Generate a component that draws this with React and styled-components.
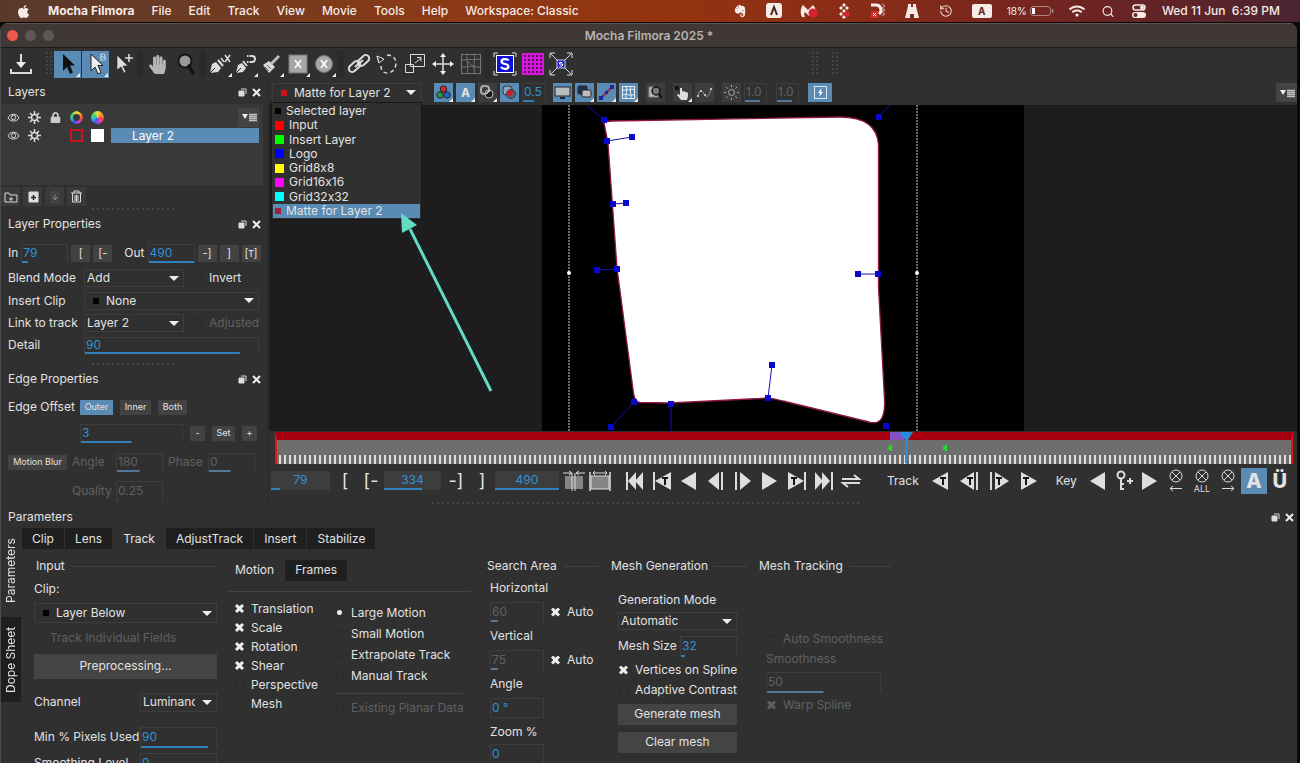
import React from 'react';
import styled, { createGlobalStyle, css } from 'styled-components';
import { FaApple, FaEvernote, FaHandPaper, FaLock, FaWifi } from 'react-icons/fa';
import { History, Search } from 'lucide-react';

const GlobalStyle = createGlobalStyle`
  * { box-sizing: border-box; }
  body {
    margin: 0;
    background: #0b0809;
    color: #e2e2e2;
    font: 12px/16px Inter, "Liberation Sans", sans-serif;
    font-feature-settings: "calt" 0;
    overflow: hidden;
  }
  button, input, select { font: inherit; color: inherit; margin: 0; padding: 0; border: 0; }
  svg { display: block; flex: none; }
`;

const Page = styled.div`
  display: flex;
  flex-direction: column;
  height: 100vh;
  overflow: hidden;
`;

/* mac menu bar */
const MenuBar = styled.header`
  flex: none;
  display: flex;
  align-items: center;
  justify-content: space-between;
  height: 22px;
  padding: 0 20px 0 16px;
  color: #f6ebe6;
  background: linear-gradient(90deg, #59392c 0, #6f3b22 17%, #8a3a16 32%, #93350f 50%, #8b2d17 65%, #712421 82%, #4b2430 100%);
`;
const Menus = styled.nav`
  display: flex;
  align-items: center;
  gap: 17px;
`;
const MenuName = styled.button`
  background: none;
  font-weight: ${p => (p.$bold ? 700 : 500)};
  white-space: nowrap;
`;
const Status = styled.div`
  display: flex;
  align-items: center;
  gap: 15px;
  svg { min-width: 16px; }
`;
const StatusApps = styled.div`
  display: flex;
  align-items: center;
  gap: 18px;
`;
const Battery = styled.div`
  display: flex;
  align-items: center;
  gap: 3px;
  font-size: 10px;
`;
const Clock = styled.time`
  font-weight: 500;
  white-space: pre;
`;
const LangBox = styled.span`
  width: 20px;
  height: 14px;
  border-radius: 2px;
  background: #f6ebe6;
  color: #5a2a22;
  font: 700 10px/14px Inter, sans-serif;
  text-align: center;
`;

/* window */
const Window = styled.main`
  flex: 1;
  min-height: 0;
  display: flex;
  flex-direction: column;
  margin: 1px 3px 0 0;
  border-left: 1px solid #4b4b4b;
  border-radius: 8px 8px 0 0;
  background: #303030;
  overflow: hidden;
`;
const TitleBar = styled.div`
  flex: none;
  display: grid;
  grid-template-columns: 1fr auto 1fr;
  align-items: center;
  height: 25px;
  padding: 0 6px;
  background: #3f3836;
  border-top: 1px solid #5b5453;
  border-bottom: 1px solid #1b1b1b;
  color: #b9b3b1;
  font-weight: 600;
`;
const Lights = styled.div`
  display: flex;
  gap: 7px;
`;
const Light = styled.button`
  width: 11px;
  height: 11px;
  border-radius: 50%;
  background: ${p => p.$color || '#5d5856'};
`;

const Toolbar = styled.div`
  flex: none;
  display: flex;
  align-items: center;
  height: 32px;
  padding-left: 6px;
`;
const ToolGroup = styled.div`
  display: flex;
  gap: ${p => (p.$tight ? 0 : 1)}px;
`;
const Divider = styled.span`
  width: ${p => (p.$thin ? 6 : 7)}px;
  height: 28px;
  margin-right: 1px;
  background: #2a2a2a;
`;
const Grip = styled.span`
  width: 8px;
  height: 24px;
  margin-left: ${p => p.$space || 0}px;
  background: radial-gradient(circle at 1px 1px, #444 1px, transparent 1px) 0 0 / 4px 4px;
`;
const Tool = styled.button`
  position: relative;
  display: grid;
  place-items: center;
  width: ${p => (p.$slim ? 26 : 27)}px;
  height: 27px;
  background: ${p => (p.$on ? '#5a8bb4' : 'transparent')};
  ${p => p.$corner && css`
    &::after {
      content: '';
      position: absolute;
      right: 1px;
      bottom: 1px;
      border: 2px solid #eee;
      border-top-color: transparent;
      border-left-color: transparent;
    }
  `}
`;

const Body = styled.div`
  flex: none;
  display: flex;
`;
const Sidebar = styled.aside`
  flex: none;
  width: 268px;
  height: 424px;
  border-right: 2px dotted #2a2a2a;
`;
const PanelHead = styled.div`
  display: flex;
  align-items: center;
  justify-content: space-between;
  height: 24px;
  padding: 0 ${p => p.$right || 6}px 0 7px;
`;
const PanelTitle = styled.h2`
  margin: 0;
  font-size: 12px;
  font-weight: 400;
`;
const HeadButtons = styled.div`
  display: flex;
  align-items: center;
  gap: 5px;
`;
const Plain = styled.button`
  display: grid;
  place-items: center;
  background: none;
`;
const Splitter = styled.div`
  height: 5px;
  margin: 0 auto;
  margin-left: ${p => (p.$left ? p.$left + 'px' : 'auto')};
  width: ${p => p.$width}px;
  background: radial-gradient(circle at 1px 2px, #474747 1px, transparent 1px) 0 0 / 5px 5px;
`;

const LayerList = styled.div`
  height: 81px;
  margin-right: 4px;
  padding-top: 3px;
  background: #393939;
`;
const LayerRow = styled.div`
  display: grid;
  grid-template-columns: repeat(5, 21px) 1fr;
  align-items: center;
  justify-items: center;
  height: ${p => (p.$head ? 20 : 16)}px;
  padding: 0 4px 0 2px;
`;
const MenuButton = styled.button`
  justify-self: end;
  display: grid;
  place-items: center;
  width: 21px;
  height: 19px;
  background: #444;
`;
const LayerName = styled.div`
  justify-self: stretch;
  margin-left: 3px;
  padding-left: 21px;
  line-height: 15px;
  background: #5a8bb4;
  color: #fff;
`;
const Square = styled.span`
  width: 13px;
  height: 13px;
  background: ${p => p.$fill || 'transparent'};
  border: 2px solid ${p => p.$line};
`;
const HueDot = styled.span`
  width: 13px;
  height: 13px;
  border-radius: 50%;
  background: conic-gradient(#f0e040, #ff9030, #f04a40, #d040d0, #4a50f0, #30c0e0, #50d050, #f0e040);
  ${p => p.$ring && css`
    mask: radial-gradient(circle, transparent 3px, #000 4px);
  `}
`;
const ListTools = styled.div`
  display: flex;
  gap: 3px;
  height: 22px;
  padding-top: 2px;
`;
const ListTool = styled.button`
  display: grid;
  place-items: center;
  width: 19px;
  height: 19px;
  background: #3a3a3a;
`;

/* form parts */
const FormRow = styled.div`
  display: flex;
  align-items: center;
  gap: ${p => (p.$gap === undefined ? 3 : p.$gap)}px;
  height: ${p => p.$h || 22}px;
  padding-left: ${p => p.$indent || 0}px;
`;
const Label = styled.label`
  flex: none;
  width: ${p => (p.$w ? p.$w + 'px' : 'auto')};
  margin-left: ${p => p.$space || 0}px;
  color: ${p => (p.$off ? '#606060' : 'inherit')};
  white-space: nowrap;
`;
const Field = styled.input`
  flex: none;
  width: ${p => p.$w}px;
  height: ${p => p.$h || 19}px;
  padding: 0 1px 2px;
  text-align: ${p => (p.$center ? 'center' : 'left')};
  color: #2f93d6;
  border: ${p => (p.$solid ? 0 : 1)}px solid #3d3d3d;
  background: linear-gradient(#337fb8, #337fb8) no-repeat left bottom / ${p => p.$fill || 0}% 2px ${p => (p.$solid ? '#3d3d3d' : 'transparent')};
  background-origin: border-box;
  background-clip: border-box;
  border-bottom-color: ${p => (p.$fill ? 'transparent' : '#3d3d3d')};
  &:disabled {
    color: #606060;
    background-image: linear-gradient(#55789a, #55789a);
  }
`;
const SelectBox = styled.span`
  flex: none;
  display: flex;
  align-items: center;
  gap: 7px;
  width: ${p => p.$w}px;
  height: ${p => p.$h || 18}px;
  padding: 0 4px;
  padding-left: ${p => (p.$dot ? 8 : 2)}px;
  border: 1px solid #3d3d3d;
  &::after {
    content: '';
    flex: none;
    border: 5px solid transparent;
    border-top-color: #eee;
    border-bottom: 0;
  }
`;
const Dot = styled.span`
  flex: none;
  width: ${p => p.$size || 6}px;
  height: ${p => p.$size || 6}px;
  background: ${p => p.$color};
`;
const Native = styled.select`
  flex: 1;
  min-width: 0;
  appearance: none;
  background: none;
  outline: 0;
`;
const Check = styled.input.attrs({ type: 'checkbox' })`
  flex: none;
  appearance: none;
  width: 9px;
  height: 9px;
  border: 1px solid #292929;
  &:checked {
    border: 0;
    background: #eee;
    clip-path: polygon(0 22%, 22% 0, 50% 26%, 78% 0, 100% 22%, 74% 50%, 100% 78%, 78% 100%, 50% 74%, 22% 100%, 0 78%, 26% 50%);
  }
  &:checked:disabled { background: #606060; }
`;
const Radio = styled.input.attrs({ type: 'radio' })`
  flex: none;
  appearance: none;
  width: 9px;
  height: 9px;
  border: 1px solid #292929;
  border-radius: 50%;
  &:checked {
    border: 2px solid #303030;
    background: #eee;
  }
`;
const SmallButton = styled.button`
  flex: none;
  min-width: ${p => p.$w || 19}px;
  height: ${p => (p.$bracket ? 17 : 15)}px;
  font-size: ${p => (p.$bracket ? 11 : 9)}px;
  line-height: 12px;
  background: ${p => (p.$on ? '#5a8bb4' : '#424242')};
`;
const WideButton = styled.button`
  width: ${p => p.$w}px;
  height: ${p => p.$h || 21}px;
  background: #444;
`;

/* viewer */
const Viewer = styled.section`
  position: relative;
  flex: 1;
  min-width: 0;
  display: flex;
  flex-direction: column;
`;
const ViewerBar = styled.div`
  display: flex;
  align-items: center;
  justify-content: space-between;
  height: 25px;
  padding-left: 3px;
`;
const ViewerTools = styled.div`
  display: flex;
  align-items: center;
  gap: 3px;
  margin-right: ${p => p.$space || 0}px;
`;
const ViewTool = styled.button`
  position: relative;
  display: grid;
  place-items: center;
  width: ${p => p.$w || 19}px;
  height: 19px;
  background: ${p => (p.$on ? '#5a8bb4' : '#3d3d3d')};
  ${p => p.$corner && css`
    &::after {
      content: '';
      position: absolute;
      right: 0;
      bottom: 0;
      border: 2px solid #eee;
      border-top-color: transparent;
      border-left-color: transparent;
    }
  `}
`;
const Popup = styled.ul`
  position: absolute;
  z-index: 2;
  top: 22px;
  left: 2px;
  width: 151px;
  height: 118px;
  margin: 0;
  padding: 1px;
  display: grid;
  grid-auto-rows: 1fr;
  list-style: none;
  background: #303030;
  border: 1px solid #181818;
`;
const PopupItem = styled.li`
  display: flex;
  align-items: center;
  gap: 5px;
  padding-left: 2px;
  line-height: 14px;
  background: ${p => (p.$on ? '#5a8bb4' : 'transparent')};
`;
const Pointer = styled.svg`
  position: absolute;
  z-index: 3;
  top: 133px;
  left: 131px;
`;
const Canvas = styled.div`
  flex: 1;
  min-height: 0;
  display: flex;
  justify-content: center;
  background: #1d1d1d;
`;
const Timeline = styled.div`
  position: relative;
  height: 32px;
  margin: 1px 4px 0 6px;
  border-top: 8px solid #a6000f;
  background:
    repeating-linear-gradient(90deg, transparent 0 2px, #dedede 2px 4px, transparent 4px 5px) no-repeat left bottom / 100% 9px,
    #6e6e6e;
  border-left: 2px solid #e01515;
  border-right: 2px solid #e01515;
`;
const PlayHead = styled.svg`
  position: absolute;
  top: -8px;
  left: 60%;
`;
const Transport = styled.div`
  display: flex;
  align-items: center;
  height: 33px;
  padding-left: 2px;
`;
const Keys = styled.div`
  display: flex;
  gap: ${p => p.$gap || 0}px;
  margin-left: ${p => p.$space || 0}px;
`;
const Key = styled.button`
  display: grid;
  place-items: center;
  width: ${p => p.$w || 26}px;
  height: 26px;
  background: ${p => (p.$on ? '#5a8bb4' : 'transparent')};
  font-size: ${p => (p.$big ? 20 : 18)}px;
  font-weight: ${p => (p.$big ? 800 : 400)};
  line-height: 20px;
`;

/* parameters */
const Params = styled.section`
  flex: 1;
  min-height: 0;
  display: flex;
  flex-direction: column;
`;
const ParamsBody = styled.div`
  display: flex;
  align-items: flex-start;
  margin-top: 3px;
`;
const SideTabs = styled.div`
  flex: none;
  width: 21px;
`;
const SideTab = styled.button`
  width: 20px;
  height: 85px;
  writing-mode: vertical-rl;
  rotate: 180deg;
  background: ${p => (p.$back ? '#1e1e1e' : 'transparent')};
`;
const ParamsMain = styled.div`
  flex: 1;
  min-width: 0;
`;
const Tabs = styled.div`
  display: flex;
  gap: ${p => p.$gap || 1}px;
`;
const Tab = styled.button`
  height: 21px;
  padding: 0 ${p => p.$pad || 10}px;
  background: ${p => (p.$front ? 'transparent' : '#1f1f1f')};
`;
const Columns = styled.div`
  display: grid;
  grid-template-columns: 183px 246px 112px 136px 132px;
  gap: 12px;
  padding: 7px 0 0 12px;
`;
const Group = styled.fieldset`
  margin: 0;
  padding: 0;
  border: 0;
  min-width: 0;
`;
const Heading = styled.div`
  display: flex;
  align-items: center;
  gap: 6px;
  height: 20px;
  margin-bottom: ${p => p.$below || 0}px;
  padding-left: ${p => p.$indent || 0}px;
  white-space: nowrap;
  &::after {
    content: '';
    flex: 1;
    height: 1px;
    background: #404040;
  }
`;
const Rule = styled.hr`
  height: 1px;
  margin: ${p => p.$m || '0'};
  border: 0;
  background: #444;
`;
const TwoCols = styled.div`
  display: grid;
  grid-template-columns: 100px 1fr;
  padding-left: 6px;
`;

/* drawings */
const Svg = ({ w = 24, h = w, box, children }) => (
  <svg width={w} height={h} viewBox={box || `0 0 ${w} ${h}`} fill="none" stroke="#dcdcdc" aria-hidden="true">{children}</svg>
);
const arrowPath = 'M7 2v17l4-4 3 7 3-1.500-3-7h5z';
const cells = [0, 1, 2, 3, 4];

const toolIcons = {
  save: <Svg><g strokeWidth="2"><path d="M12 2v13M2 17v4h20v-4" /></g><path d="M7 10h10l-5 6z" fill="#eee" stroke="none" /></Svg>,
  arrow: <Svg><path d={arrowPath} fill="#111" stroke="none" /></Svg>,
  arrowB: <Svg><path d={arrowPath} fill="#eee" stroke="#222" /><path d="M17 2v6h3a1.500 1.500 0 000-3h-3 2.500a1.500 1.500 0 000-3z" stroke="#c4d6e6" strokeWidth="1.200" /></Svg>,
  arrowPlus: <Svg><path d="M5 3v15l4-3 3 6 2-1-3-6h5z" fill="#ddd" stroke="#222" strokeWidth=".6" /><path d="M17 2v8M13 6h8" strokeWidth="1.600" /></Svg>,
  zoom: <Svg><circle cx="11" cy="9" r="6.500" fill="#999" stroke="#151515" strokeWidth="2" /><path d="M15 14l4 7" stroke="#111" strokeWidth="3.500" strokeLinecap="round" /></Svg>,
  penX: <Svg><path d="M2 21l2-9 4-2 5 6-3 4z" fill="#ddd" stroke="none" /><path d="M2 21l5-5" stroke="#222" /><path d="M10 8l5 6" strokeWidth="2" /><path d="M13 6l3 4M17 3l5 7M22 3l-5 7" strokeWidth="1.500" /></Svg>,
  penMagnet: <Svg><path d="M2 21l2-8 4-2 4 5-3 4z" fill="#ddd" stroke="none" /><path d="M2 21l5-5" stroke="#222" /><path d="M9 9l4 5" strokeWidth="2" /><path d="M13 4h5a2.500 2.500 0 010 6h-5" strokeWidth="2" /><path d="M15 3v2M15 9v2" stroke="#333" /></Svg>,
  brush: <Svg><path d="M3 13l6-4 6 6-6 6z" fill="#ddd" stroke="none" /><path d="M5 15l4 4M7 13l4 4" stroke="#555" /><path d="M11 12l8-8" strokeWidth="3" stroke="#bbb" /></Svg>,
  rectX: <Svg><rect x="3" y="3" width="18" height="18" fill="#a6a6a6" stroke="#777" /><path d="M9 8l6 8M15 8l-6 8" stroke="#fff" strokeWidth="1.600" /></Svg>,
  circX: <Svg><circle cx="12" cy="12" r="8.500" fill="#a6a6a6" stroke="#777" /><path d="M9 8l6 8M15 8l-6 8" stroke="#fff" strokeWidth="1.600" /></Svg>,
  link: <Svg><g strokeWidth="2"><rect x="1" y="11" width="13" height="7" rx="3.500" transform="rotate(-42 7.500 14.500)" /><rect x="10" y="5" width="13" height="7" rx="3.500" transform="rotate(-42 16.500 8.500)" /><path d="M8 15l8-7" /></g></Svg>,
  lasso: <Svg><path d="M2 4l7 3-5 4zM2 4l2 7" /><path d="M12 3c5 0 9 3 9 8s-3 10-9 10c-4 0-6-3-6-7" strokeDasharray="4 3" strokeWidth="1.500" /></Svg>,
  scale: <Svg><path d="M7.500 2.500h14v12h-14zM2.500 12.500h8v8h-8zM12 11l6-5M14 5.500h4v4" /></Svg>,
  move: <Svg><path d="M12 3v18M3 12h18" strokeWidth="1.500" /><path d="M9 5l3-4 3 4zM9 19l3 4 3-4zM5 9l-4 3 4 3zM19 9l4 3-4 3z" fill="#eee" stroke="none" /></Svg>,
  mesh: <Svg><path d="M2.500 2.500h19v19h-19zM2 9c4-2 8-1 20-2M2 15c5 1 10-3 20 1M8 2c-1 8 2 11 0 20M15 2c2 6-2 10 1 20M8 9l8 7" stroke="#777" /></Svg>,
  surface: <Svg><path d="M1 5V1h4M19 1h4v4M23 19v4h-4M5 23H1v-4" /><rect x="3.500" y="3.500" width="17" height="17" fill="#1010d8" stroke="#fff" /><path d="M15.500 8.500c-1-2-7-2-7 1 0 3.500 7 1.500 7 5 0 3-6 3-7.500 .5" stroke="#fff" strokeWidth="2.200" /></Svg>,
  grid: (
    <Svg>
      <path d="M1 1h22v22H1z" fill="#d916dc" stroke="none" />
      {cells.map(r => cells.map(c => <rect key={r + '-' + c} x={3 + c * 4} y={3 + r * 4} width="2" height="2" fill="#4d1450" stroke="none" />))}
    </Svg>
  ),
  align: <Svg><path d="M2 2l20 20M22 2L2 22M1 6V1h5M18 1h5v5M23 18v5h-5M6 23H1v-5" /><rect x="8" y="8" width="8" height="8" fill="#1515d8" stroke="#ccd" /><path d="M13.500 10.500h-3v1.500h3v2h-3" stroke="#fff" /></Svg>,
};

const viewIcons = {
  rgb: <Svg w={17}><circle cx="8.500" cy="5" r="3.200" fill="#d22" stroke="#222" /><circle cx="5" cy="11" r="3.200" fill="#2a9a3a" stroke="#222" /><circle cx="12" cy="11" r="3.200" fill="#26c" stroke="#222" /></Svg>,
  alpha: <b>A</b>,
  overlap: <Svg w={17}><rect x="2" y="2" width="8" height="8" rx="3" strokeWidth="2" stroke="#aaa" /><circle cx="10" cy="10" r="4" fill="#1c1c1c" stroke="#bbb" /><path d="M7 10l4-4" stroke="#ddd" strokeWidth="1.500" /></Svg>,
  matte: <Svg w={17}><rect x="2" y="2" width="9" height="9" rx="3" fill="#8aa6bf" stroke="#333" /><circle cx="10" cy="10" r="4.500" fill="#46688a" stroke="#333" /><circle cx="9" cy="9" r="3" fill="#c8202c" stroke="none" /></Svg>,
  screen: <Svg w={17}><rect x="1" y="3" width="15" height="9" fill="#bbb" stroke="#223" /><path d="M6 14h5" stroke="#223" strokeWidth="2" /></Svg>,
  layers: <Svg w={17}><rect x="2" y="2" width="9" height="8" rx="1" fill="#234" stroke="#223" /><rect x="6" y="6" width="9" height="7" rx="1" fill="#bbb" stroke="#223" /></Svg>,
  spline: <Svg w={17}><path d="M4 13L13 4" stroke="#1c1c4a" strokeWidth="2" /><path d="M5 12L12 5" stroke="#d35" strokeWidth="1.500" /><path d="M1 12h4v4H1zM12 1h4v4h-4zM7 7h3v3H7z" fill="#22229a" stroke="none" /></Svg>,
  mesh: <Svg w={17}><path d="M2.500 2.500h12v12h-12zM2 6c5 1 8-2 13 0M2 11c6-2 8 2 13-1M6 2c2 5-1 9 0 13M11 2c-2 5 1 9 0 13" stroke="#e5edf5" /></Svg>,
  zoom: <Svg w={17}><path d="M2 3h9v10H2z" fill="#bbb" stroke="#888" /><circle cx="9" cy="7" r="4" fill="#777" stroke="#111" strokeWidth="1.500" /><path d="M12 10l3 4" stroke="#111" strokeWidth="2" /></Svg>,
  hand: <Svg w={17}><path d="M1 2h4v4H1z" fill="#111" stroke="none" /><path d="M6 4v7l-2-1-1 1 4 5h6l1-4V9l-2-1-4-1V4z" fill="#ddd" stroke="none" /></Svg>,
  curve: <Svg w={17}><path d="M2 12c1-7 4-6 6-2s5 3 7-5" stroke="#999" /><path d="M1 11h2v2H1zM4 6h2v2H4zM8 10h2v2H8zM14 4h2v2h-2z" fill="#bbb" stroke="none" /></Svg>,
  sun: <Svg w={17}><circle cx="8.500" cy="8.500" r="3" stroke="#aaa" /><path d="M8.500 1v2M8.500 14v2M1 8.500h2M14 8.500h2M3 3l1.500 1.500M12.500 12.500L14 14M14 3l-1.500 1.500M4.500 12.500L3 14" stroke="#aaa" /></Svg>,
  bolt: <Svg w={17}><rect x="2.500" y="2.500" width="12" height="12" stroke="#dfe9f2" /><path d="M9.500 4L6 9h2l-1 4 4-5H9z" fill="#fff" stroke="none" /></Svg>,
};

const Eye = () => <Svg w={13}><path d="M1 7c2-5 9-5 11 0-2 4-9 4-11 0z" /><circle cx="6.500" cy="6.500" r="2.200" /></Svg>;
const Gear = () => <Svg w={13}><circle cx="6.500" cy="6.500" r="3" strokeWidth="1.500" /><path d="M6.500 0v3M6.500 10v3M0 6.500h3M10 6.500h3M2 2l2 2M9 9l2 2M11 2L9 4M4 9l-2 2" strokeWidth="1.500" /></Svg>;
const Lines = () => <Svg w={16} h={10}><path d="M1 2h6L4 7z" fill="#eee" stroke="none" /><path d="M8 2.500h8M8 4.500h8M8 6.500h8M8 8.500h8" stroke="#c4c4c4" strokeWidth="1.300" /></Svg>;

const PanelButtons = () => (
  <HeadButtons>
    <Plain aria-label="Float panel"><Svg w={9}><path d="M3 1h5v5" /><path d="M1 3h5v5H1z" fill="#ddd" stroke="#ddd" /></Svg></Plain>
    <Plain aria-label="Close panel"><Svg w={9}><path d="M1 1l7 7M8 1L1 8" strokeWidth="2" stroke="#eee" /></Svg></Plain>
  </HeadButtons>
);

const Select = ({ label, value, w, h, dot, id }) => (
  <SelectBox $w={w} $h={h} $dot={dot}>
    {dot && <Dot $color={dot} />}
    <Native id={id} aria-label={label} defaultValue={value}><option>{value}</option></Native>
  </SelectBox>
);

const Tick = ({ text, off, on, h, gap = 7, indent, id }) => (
  <FormRow $h={h} $gap={gap} $indent={indent}>
    <Check id={id} defaultChecked={on} disabled={off} />
    <Label htmlFor={id} $off={off}>{text}</Label>
  </FormRow>
);

const shapes = {
  bar: x => <path d={`M${x} 3v18`} strokeWidth="2" />,
  left: (x, w = 15) => <path d={`M${x} 12l${w}-9v18z`} fill="#dedede" stroke="none" />,
  right: (x, w = 15) => <path d={`M${x + w} 12l-${w}-9v18z`} fill="#dedede" stroke="none" />,
  t: x => <path d={`M${x - 3} 9h6M${x} 9v7`} stroke="#161616" strokeWidth="2" />,
};
const { bar, left, right, t } = shapes;
const playIcons = [
  ['First frame', <>{bar(4)}{left(5, 8)}{left(12, 8)}</>],
  ['Previous track start', <>{bar(4)}{left(5, 16)}{t(15)}</>],
  ['Play backward', left(4)],
  ['Step back', <>{left(4, 11)}{bar(18)}</>],
  ['Step forward', <>{bar(5)}{right(9, 11)}</>],
  ['Play forward', right(4)],
  ['Next track end', <>{right(3, 16)}{bar(20)}{t(9)}</>],
  ['Last frame', <>{right(3, 8)}{right(10, 8)}{bar(20)}</>],
  ['Loop', <path d="M3 10h17l-5-4M21 14H4l5 4" strokeWidth="2" />],
];
const trackIcons = [
  ['Track backwards', <>{left(3, 16)}{t(14)}</>],
  ['Track back one frame', <>{left(2, 14)}{bar(19)}{t(12)}</>],
  ['Track forward one frame', <>{bar(4)}{right(8, 14)}{t(12)}</>],
  ['Track forwards', <>{right(5, 16)}{t(10)}</>],
];
const keyIcons = [
  ['Previous key', left(4)],
  ['Add key', <><circle cx="9" cy="6" r="3.500" strokeWidth="2" /><path d="M9 9v12M9 15h3M9 20h3M15 12h6M18 9v6" strokeWidth="2" /></>],
  ['Next key', right(4)],
  ['Delete keys before', <><circle cx="12" cy="7" r="6" /><path d="M8 3l8 8M16 3l-8 8M6 19.500h12M9 17l-3 2.500 3 2.500" /></>],
  ['Delete all keys', <><circle cx="12" cy="7" r="6" /><path d="M8 3l8 8M16 3l-8 8" /><text x="12" y="23" fontSize="9" textAnchor="middle" fill="#dcdcdc" stroke="none">ALL</text></>],
  ['Delete keys after', <><circle cx="12" cy="7" r="6" /><path d="M8 3l8 8M16 3l-8 8M6 19.500h12M15 17l3 2.500-3 2.500" /></>],
];
const keyList = (list, w) => list.map(([name, art]) => (
  <Key key={name} aria-label={name} $w={w}><Svg>{art}</Svg></Key>
));

const points = [[62, 15], [337, 12], [65, 36], [90, 32], [71, 99], [84, 98], [55, 165], [75, 164], [316, 169], [336, 169], [230, 260], [226, 293], [92, 297], [129, 299], [69, 322], [344, 321]];

const Matte = () => (
  <svg width="482" height="100%" viewBox="0 0 482 326" preserveAspectRatio="xMidYMin slice" role="img" aria-label="Layer matte">
    <rect width="482" height="326" fill="#000" />
    <path d="M27 0v326M375 0v326" stroke="#d5d5d5" strokeDasharray="2 1" />
    <path
      d="M62 18Q63 16 70 16L298 12Q335 12 336.500 40V182L342.500 294Q344 322 327 317L241 296Q228 292 218 293.500L128 298 98 297.500Q93 297 91.500 288L75 163 66 38z"
      fill="#fff" stroke="#8c1840" strokeWidth="1.300"
    />
    <path d="M45 0l17 15M337 12l11-12M65 36l25-4M71 99l13-1M55 165l20-1M316 169h20M230 260l-4 33M92 297l-23 25M129 299v27" stroke="#1212b4" fill="none" />
    {points.map(([x, y]) => <rect key={x + '-' + y} x={x - 3} y={y - 3} width="6" height="6" fill="#0808cc" />)}
    <circle cx="27" cy="168" r="2" fill="#fff" />
    <circle cx="375" cy="168" r="2" fill="#fff" />
  </svg>
);

const clips = [
  ['Selected layer', '#000', 6],
  ['Input', '#f00', 9],
  ['Insert Layer', '#0f0', 9],
  ['Logo', '#00f', 9],
  ['Grid8x8', '#ff0', 9],
  ['Grid16x16', '#f0f', 9],
  ['Grid32x32', '#0ff', 9],
  ['Matte for Layer 2', '#a31d3f', 6],
];

const App = () => {
  return (
    <Page>
      <GlobalStyle />
      <MenuBar>
        <Menus>
          <FaApple size={15} />
          <MenuName $bold>Mocha Filmora</MenuName>
          {['File', 'Edit', 'Track', 'View', 'Movie', 'Tools', 'Help', 'Workspace: Classic'].map(name => (
            <MenuName key={name}>{name}</MenuName>
          ))}
        </Menus>
        <Status>
          <StatusApps>
            <FaEvernote size={14} />
            <Svg w={16}><rect width="16" height="15" rx="3" fill="#f6ebe6" stroke="none" /><path d="M5 12l3-8 3 8" stroke="#4a241c" strokeWidth="2" /></Svg>
            <Svg w={18} h={16}><path d="M2 14C-1 8 2 3 3 2l5 5 5-5c2 2 3 5 3 7L9 13 5 9c-1 2-1 3 0 5z" fill="#f6ebe6" stroke="none" /><circle cx="13" cy="10" r="4.500" fill="#d8232f" stroke="none" /></Svg>
            <Svg w={16}><path d="M8 0l2 2-2 2-2-2zM5 3l2 2-2 2-2-2zM11 3l2 2-2 2-2-2zM8 6l2 2-2 2-2-2zM5 9l2 2-2 2-2-2zM8 12l2 2-2 2-2-2z" fill="#f6ebe6" stroke="none" /><circle cx="11" cy="11" r="3" fill="#d8232f" stroke="none" /></Svg>
            <Svg w={16}><path d="M1 2h5a5 5 0 013 9" strokeWidth="3" stroke="#f6ebe6" /><path d="M12 1l3 2-3 2 3 2-3 2 3 2-3 2" stroke="#d9a79a" /><path d="M1 8h7v7H1z" fill="#e22a20" stroke="none" /><path d="M3 10l3 3M6 10l-3 3" stroke="#fff" /></Svg>
            <Svg w={16}><path d="M4 1h3v3h2V1h3v2l3 12H10v-4H6v4H1L4 3z" fill="#f6ebe6" stroke="none" /></Svg>
            <History size={14} strokeWidth={1.8} color="#eadbd6" />
            <LangBox>A</LangBox>
          </StatusApps>
          <Battery>
            18%
            <Svg w={24} h={12}><rect x=".5" y="1.500" width="20" height="9" rx="3" stroke="#a88988" /><path d="M2 3h3v6H2z" fill="#fff" stroke="none" /><path d="M22.500 4v4" stroke="#a88988" strokeWidth="1.500" /></Svg>
          </Battery>
          <FaWifi size={14} />
          <Search size={13} strokeWidth={2.2} />
          <Svg w={16} h={14}><rect x="2" y="1" width="12" height="5" rx="2.500" stroke="#f6ebe6" strokeWidth="1.500" /><circle cx="11" cy="3.500" r="2" fill="#f6ebe6" stroke="none" /><rect x="1" y="8" width="14" height="6" rx="3" fill="#f6ebe6" stroke="none" /><circle cx="4.500" cy="11" r="2" fill="#5e2430" stroke="none" /></Svg>
          <Clock>{'Wed 11 Jun  6:39 PM'}</Clock>
        </Status>
      </MenuBar>

      <Window>
        <TitleBar>
          <Lights>
            <Light $color="#f1574e" aria-label="Close" />
            <Light aria-label="Minimise" />
            <Light aria-label="Zoom window" />
          </Lights>
          <span>Mocha Filmora 2025 *</span>
        </TitleBar>

        <Toolbar>
          <ToolGroup><Tool aria-label="Save project">{toolIcons.save}</Tool></ToolGroup>
          <Grip $space={12} />
          <ToolGroup>
            <Tool $on $corner aria-label="Pick">{toolIcons.arrow}</Tool>
            <Tool $on $corner aria-label="Pick bezier">{toolIcons.arrowB}</Tool>
            <Tool aria-label="Add point">{toolIcons.arrowPlus}</Tool>
          </ToolGroup>
          <Divider $thin />
          <ToolGroup>
            <Tool aria-label="Pan"><FaHandPaper size={19} color="#b5b5b5" /></Tool>
            <Tool aria-label="Zoom">{toolIcons.zoom}</Tool>
          </ToolGroup>
          <Divider />
          <ToolGroup $tight>
            <Tool $slim $corner aria-label="X-spline">{toolIcons.penX}</Tool>
            <Tool $slim $corner aria-label="Magnetic spline">{toolIcons.penMagnet}</Tool>
            <Tool $slim $corner aria-label="Area brush">{toolIcons.brush}</Tool>
            <Tool $slim $corner aria-label="Rectangle">{toolIcons.rectX}</Tool>
            <Tool $slim $corner aria-label="Ellipse">{toolIcons.circX}</Tool>
          </ToolGroup>
          <Divider />
          <ToolGroup>
            <Tool aria-label="Attach layer">{toolIcons.link}</Tool>
            <Tool aria-label="Lasso">{toolIcons.lasso}</Tool>
            <Tool aria-label="Scale">{toolIcons.scale}</Tool>
            <Tool aria-label="Move">{toolIcons.move}</Tool>
            <Tool aria-label="Mesh">{toolIcons.mesh}</Tool>
          </ToolGroup>
          <Divider $thin />
          <ToolGroup>
            <Tool aria-label="Show surface">{toolIcons.surface}</Tool>
            <Tool aria-label="Show grid">{toolIcons.grid}</Tool>
            <Tool aria-label="Align surface">{toolIcons.align}</Tool>
          </ToolGroup>
          <Grip $space={238} />
          <Grip $space={12} />
        </Toolbar>

        <Body>
          <Sidebar>
            <PanelHead><PanelTitle>Layers</PanelTitle><PanelButtons /></PanelHead>
            <LayerList>
              <LayerRow $head>
                <Eye /><Gear /><FaLock size={11} color="#ccc" /><HueDot $ring /><HueDot />
                <MenuButton aria-label="Layer options"><Lines /></MenuButton>
              </LayerRow>
              <LayerRow>
                <Eye /><Gear /><span /><Square $line="#c8141e" /><Square $line="#fff" $fill="#fff" />
                <LayerName>Layer 2</LayerName>
              </LayerRow>
            </LayerList>
            <ListTools>
              <ListTool aria-label="New group"><Svg w={14}><path d="M1 12V3h4l1 2h7v7zM7 7v4M5 9h4" /></Svg></ListTool>
              <ListTool aria-label="Duplicate layer"><Svg w={12}><path d="M2 1h9v10H2z" fill="#ddd" /><path d="M6.500 4v5M4 6.500h5" stroke="#222" strokeWidth="1.500" /></Svg></ListTool>
              <ListTool aria-label="Merge layer"><Svg w={12}><path d="M3 1h6v10H3z" stroke="#555" /><path d="M6 3v5M4 6l2 3 2-3" stroke="#888" /></Svg></ListTool>
              <ListTool aria-label="Delete layer"><Svg w={13}><path d="M1 3h11M4 3V1h5v2M2.500 3v9h8V3M5 5v6M6.500 5v6M8 5v6" /></Svg></ListTool>
            </ListTools>
            <Splitter $width={85} />
            <PanelHead><PanelTitle>Layer Properties</PanelTitle><PanelButtons /></PanelHead>
            <FormRow $h={3} />
            <FormRow $h={28} $indent={7}>
              <Label htmlFor="in">In</Label><Field id="in" $w={47} $fill={15} defaultValue="79" />
              <SmallButton $bracket>[</SmallButton><SmallButton $bracket>[-</SmallButton>
              <Label htmlFor="out" $space={9}>Out</Label><Field id="out" $w={47} $fill={100} defaultValue="490" />
              <SmallButton $bracket>-]</SmallButton><SmallButton $bracket>]</SmallButton><SmallButton $bracket>[т]</SmallButton>
            </FormRow>
            <FormRow $gap={0} $indent={7}>
              <Label $w={76} htmlFor="blend">Blend Mode</Label><Select id="blend" w={100} value="Add" />
              <Tick id="invert" text="Invert" indent={9} />
            </FormRow>
            <FormRow $h={23} $gap={0} $indent={7}>
              <Label $w={76} htmlFor="insert">Insert Clip</Label><Select id="insert" w={175} value="None" dot="#000" />
            </FormRow>
            <FormRow $gap={0} $indent={7}>
              <Label $w={76} htmlFor="linkto">Link to track</Label><Select id="linkto" w={100} value="Layer 2" />
              <Tick id="adjusted" text="Adjusted" off indent={9} />
            </FormRow>
            <FormRow $gap={0} $indent={7}>
              <Label $w={76} htmlFor="detail">Detail</Label><Field id="detail" $w={175} $h={17} $fill={89} defaultValue="90" />
            </FormRow>
            <FormRow $h={6} />
            <Splitter $width={85} />
            <PanelHead><PanelTitle>Edge Properties</PanelTitle><PanelButtons /></PanelHead>
            <FormRow $h={32} $gap={7} $indent={7}>
              <Label $w={65}>Edge Offset</Label>
              <SmallButton $w={33} $on>Outer</SmallButton><SmallButton $w={31}>Inner</SmallButton><SmallButton $w={29}>Both</SmallButton>
            </FormRow>
            <FormRow $h={20} $gap={7} $indent={79}>
              <Field aria-label="Edge offset" $w={103} $fill={50} defaultValue="3" />
              <SmallButton $w={15}>-</SmallButton><SmallButton $w={23}>Set</SmallButton><SmallButton $w={15}>+</SmallButton>
            </FormRow>
            <FormRow $h={38} $gap={5} $indent={7}>
              <SmallButton $w={59}>Motion Blur</SmallButton>
              <Label $off $w={39} htmlFor="blurangle">Angle</Label><Field id="blurangle" disabled $w={47} $fill={50} defaultValue="180" />
              <Label $off $w={35} htmlFor="phase">Phase</Label><Field id="phase" disabled $w={47} $fill={48} defaultValue="0" />
            </FormRow>
            <FormRow $h={20} $gap={5} $indent={71}>
              <Label $off $w={39} htmlFor="quality">Quality</Label><Field id="quality" disabled $w={47} $h={20} $fill={3} defaultValue="0.25" />
            </FormRow>
          </Sidebar>

          <Viewer>
            <ViewerBar>
              <ViewerTools>
                <ViewerTools $space={10}><Select label="Viewed clip" w={149} h={20} value="Matte for Layer 2" dot="#c8141e" /></ViewerTools>
                <ViewerTools $space={4}>
                  <ViewTool $on $corner aria-label="Colour channels">{viewIcons.rgb}</ViewTool>
                  <ViewTool $on $corner aria-label="Alpha">{viewIcons.alpha}</ViewTool>
                  <ViewTool $corner aria-label="Mattes">{viewIcons.overlap}</ViewTool>
                  <ViewTool $on aria-label="Colorize">{viewIcons.matte}</ViewTool>
                  <Field aria-label="Matte opacity" $w={24} $fill={50} defaultValue="0.5" />
                </ViewerTools>
                <ViewerTools $space={5}>
                  <ViewTool $on aria-label="Overlays">{viewIcons.screen}</ViewTool>
                  <ViewTool $on $corner aria-label="Layer outlines">{viewIcons.layers}</ViewTool>
                  <ViewTool $on $corner aria-label="Splines">{viewIcons.spline}</ViewTool>
                  <ViewTool $on $corner aria-label="Show mesh">{viewIcons.mesh}</ViewTool>
                </ViewerTools>
                <ViewerTools $space={5}><ViewTool aria-label="Zoom window">{viewIcons.zoom}</ViewTool></ViewerTools>
                <ViewerTools $space={5}>
                  <ViewTool $corner aria-label="Stabilise view">{viewIcons.hand}</ViewTool>
                  <ViewTool aria-label="Trace">{viewIcons.curve}</ViewTool>
                </ViewerTools>
                <ViewerTools $space={6}>
                  <ViewTool aria-label="Brightness">{viewIcons.sun}</ViewTool>
                  <Field disabled aria-label="Gain" $w={23} $fill={70} defaultValue="1.0" />
                </ViewerTools>
                <ViewerTools $space={6}><Field disabled aria-label="Gamma" $w={23} $fill={70} defaultValue="1.0" /></ViewerTools>
                <ViewTool $w={24} $on aria-label="Preview">{viewIcons.bolt}</ViewTool>
              </ViewerTools>
              <MenuButton aria-label="Viewer options"><Lines /></MenuButton>
            </ViewerBar>
            <Popup>
              {clips.map(([name, color, size], i) => (
                <PopupItem key={name} $on={i === clips.length - 1}><Dot $color={color} $size={size} />{name}</PopupItem>
              ))}
            </Popup>
            <Pointer width="94" height="182">
              <path d="M10 16l81 162" stroke="#62dcc3" strokeWidth="3" />
              <path d="M1 0l16 12-15 8z" fill="#62dcc3" />
            </Pointer>

            <Canvas><Matte /></Canvas>
            <Timeline>
              <PlayHead width="66" height="31">
                <path d="M5 0h14v8H5z" fill="#8250c0" />
                <path d="M14 0h14l-5 8v23h-3V8z" fill="#268bd8" />
                <path d="M7 12v8l-5-4zM62 12v8l-5-4z" fill="#22dd22" />
              </PlayHead>
            </Timeline>
            <Transport>
              <Field aria-label="In point" $solid $center $w={59} $fill={15} defaultValue="79" />
              <Keys $space={2}><Key>[</Key><Key>[-</Key></Keys>
              <Field aria-label="Current frame" $solid $center $w={57} $fill={67} defaultValue="334" />
              <Keys $space={2}><Key>-]</Key><Key>]</Key></Keys>
              <Field aria-label="Out point" $solid $center $w={64} $fill={100} defaultValue="490" />
              <Keys $space={2}>
                <Key aria-label="Zoom timeline in"><Svg><path d="M3 7h18v13H3z" fill="#858585" stroke="none" /><path d="M10 4v18M13 4v18" /><path d="M1 4h8M7 2l3 2-3 2M23 4h-8M17 2l-3 2 3 2" /></Svg></Key>
                <Key aria-label="Zoom timeline out"><Svg><path d="M3 7h18v13H3z" fill="#858585" /><path d="M2 3v19M22 3v19" strokeWidth="1.500" /><path d="M5 4h14M7 2L5 4l2 2M17 2l2 2-2 2" /></Svg></Key>
              </Keys>
              <Keys $space={8}>{keyList(playIcons, 27)}</Keys>
              <Label $space={23}>Track</Label>
              <Keys $space={8} $gap={1}>{keyList(trackIcons, 28)}</Keys>
              <Label $space={14}>Key</Label>
              <Keys $space={8}>
                {keyList(keyIcons)}
                <Key $big $on>A</Key>
                <Key $big>Ü</Key>
              </Keys>
            </Transport>
            <FormRow $h={4} />
            <Splitter $width={430} $left={163} />
            <FormRow $h={3} />
          </Viewer>
        </Body>

        <Params>
          <PanelHead $right={3}><PanelTitle>Parameters</PanelTitle><PanelButtons /></PanelHead>
          <ParamsBody>
            <SideTabs>
              <SideTab>Parameters</SideTab>
              <SideTab $back>Dope Sheet</SideTab>
            </SideTabs>
            <ParamsMain>
              <Tabs>
                <Tab>Clip</Tab><Tab>Lens</Tab><Tab $front>Track</Tab><Tab>AdjustTrack</Tab><Tab>Insert</Tab><Tab>Stabilize</Tab>
              </Tabs>
              <Columns>
                <Group>
                  <Heading $indent={2}>Input</Heading>
                  <FormRow $h={26}><Label htmlFor="clip">Clip:</Label></FormRow>
                  <FormRow $h={22}><Select id="clip" w={183} h={20} value="Layer Below" dot="#000" /></FormRow>
                  <Tick id="fields" text="Track Individual Fields" off h={28} />
                  <FormRow $h={28}><WideButton $w={183} $h={25}>Preprocessing...</WideButton></FormRow>
                  <FormRow $h={44} $gap={0}><Label $w={106} htmlFor="channel">Channel</Label><Select id="channel" w={77} h={19} value="Luminance" /></FormRow>
                  <FormRow $h={26} $gap={0}><Label $w={106} htmlFor="minpix">Min % Pixels Used</Label><Field id="minpix" $w={77} $h={21} $fill={88} defaultValue="90" /></FormRow>
                  <FormRow $h={26} $gap={0}><Label $w={106} htmlFor="smooth">Smoothing Level</Label><Field id="smooth" $w={77} $h={21} defaultValue="0" /></FormRow>
                </Group>

                <Group>
                  <FormRow $h={28} $gap={0}>
                    <Tabs $gap={5}><Tab $front $pad={6}>Motion</Tab><Tab>Frames</Tab></Tabs>
                  </FormRow>
                  <Rule $m="7px 4px 7px 0" />
                  <TwoCols>
                    <div>
                      {['Translation', 'Scale', 'Rotation', 'Shear', 'Perspective', 'Mesh'].map((name, i) => (
                        <Tick key={name} id={'motion-' + name} text={name} on={i < 4} h={19} />
                      ))}
                    </div>
                    <div>
                      <FormRow $h={3} />
                      {['Large Motion', 'Small Motion', 'Extrapolate Track', 'Manual Track'].map((name, i) => (
                        <FormRow key={name} $h={21} $gap={7}>
                          <Radio name="motion" id={'size-' + i} defaultChecked={i === 0} />
                          <Label htmlFor={'size-' + i}>{name}</Label>
                        </FormRow>
                      ))}
                      <Rule $m="7px 12px 3px 0" />
                      <FormRow $h={21} $gap={7}>
                        <Radio name="motion" id="planar" disabled /><Label $off htmlFor="planar">Existing Planar Data</Label>
                      </FormRow>
                    </div>
                  </TwoCols>
                </Group>

                <Group>
                  <Heading>Search Area</Heading>
                  <FormRow $h={24} $indent={3}><Label htmlFor="horizontal">Horizontal</Label></FormRow>
                  <FormRow $h={24} $indent={3} $gap={7}>
                    <Field id="horizontal" disabled $w={54} $h={20} $fill={15} defaultValue="60" /><Tick id="autoh" text="Auto" on />
                  </FormRow>
                  <FormRow $h={24} $indent={3}><Label htmlFor="vertical">Vertical</Label></FormRow>
                  <FormRow $h={24} $indent={3} $gap={7}>
                    <Field id="vertical" disabled $w={54} $h={20} $fill={15} defaultValue="75" /><Tick id="autov" text="Auto" on />
                  </FormRow>
                  <FormRow $h={24} $indent={3}><Label htmlFor="angle">Angle</Label></FormRow>
                  <FormRow $h={24} $indent={3}><Field id="angle" $w={54} $h={20} defaultValue="0 °" /></FormRow>
                  <FormRow $h={24} $indent={3}><Label htmlFor="zoom">Zoom %</Label></FormRow>
                  <FormRow $h={20} $indent={3}><Field id="zoom" $w={54} $h={20} defaultValue="0" /></FormRow>
                </Group>

                <Group>
                  <Heading $below={14}>Mesh Generation</Heading>
                  <FormRow $h={20} $indent={7}><Label htmlFor="genmode">Generation Mode</Label></FormRow>
                  <FormRow $h={22} $indent={7}><Select id="genmode" w={119} value="Automatic" /></FormRow>
                  <FormRow $h={28} $indent={7} $gap={0}><Label $w={62} htmlFor="meshsize">Mesh Size</Label><Field id="meshsize" $w={57} $h={21} $fill={9} defaultValue="32" /></FormRow>
                  <Tick id="vertices" text="Vertices on Spline" on h={20} indent={8} />
                  <Tick id="adaptive" text="Adaptive Contrast" h={20} indent={8} />
                  <FormRow $h={28} $indent={7}><WideButton $w={119}>Generate mesh</WideButton></FormRow>
                  <FormRow $h={28} $indent={7}><WideButton $w={119}>Clear mesh</WideButton></FormRow>
                </Group>

                <Group>
                  <Heading $below={53}>Mesh Tracking</Heading>
                  <Tick id="autosmooth" text="Auto Smoothness" off h={20} indent={8} />
                  <FormRow $h={20} $indent={7}><Label $off htmlFor="smoothness">Smoothness</Label></FormRow>
                  <FormRow $h={26} $indent={7}><Field id="smoothness" disabled $w={115} $h={21} $fill={50} defaultValue="50" /></FormRow>
                  <Tick id="warp" text="Warp Spline" off on h={20} indent={8} />
                </Group>
              </Columns>
            </ParamsMain>
          </ParamsBody>
        </Params>
      </Window>
    </Page>
  );
};

export default App;
